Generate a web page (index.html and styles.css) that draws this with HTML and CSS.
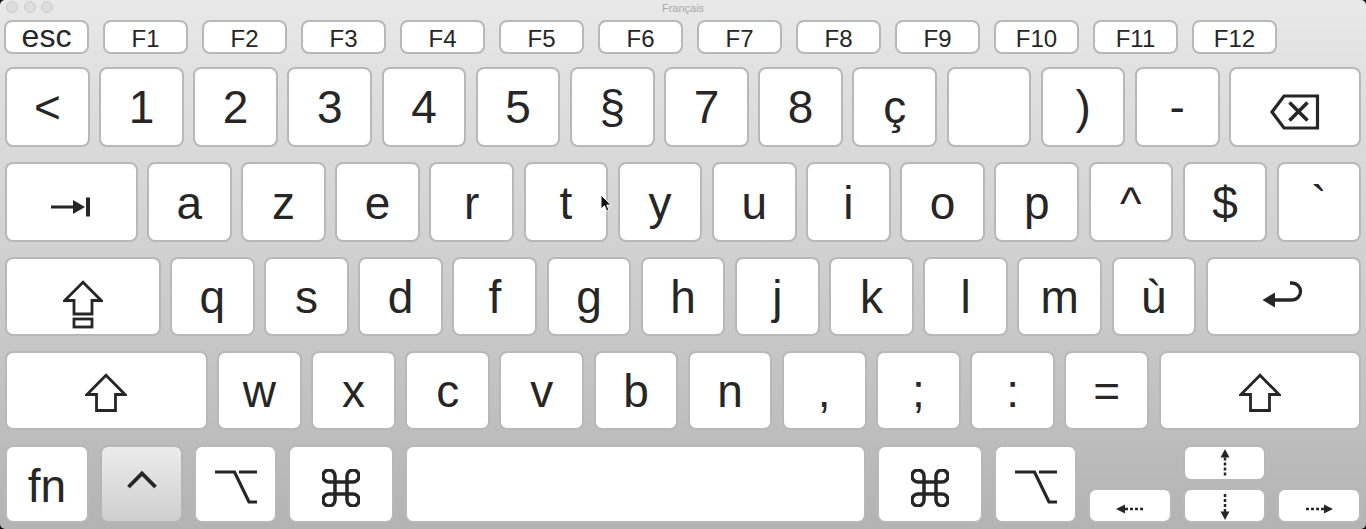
FILE: index.html
```html
<!DOCTYPE html>
<html>
<head>
<meta charset="utf-8">
<link rel="stylesheet" href="styles.css">
</head>
<body>
<div class="window">
  <div class="titlebar">
    <div class="lights"><span class="light"></span><span class="light"></span><span class="light"></span></div>
    <div class="title">Français</div>
    <div></div>
  </div>
  <div class="keyboard">
    <div class="row frow">
      <div class="key fkey esc">esc</div>
      <div class="key fkey">F1</div>
      <div class="key fkey">F2</div>
      <div class="key fkey">F3</div>
      <div class="key fkey">F4</div>
      <div class="key fkey">F5</div>
      <div class="key fkey">F6</div>
      <div class="key fkey">F7</div>
      <div class="key fkey">F8</div>
      <div class="key fkey">F9</div>
      <div class="key fkey">F10</div>
      <div class="key fkey">F11</div>
      <div class="key fkey">F12</div>
    </div>
    <div class="row r1">
      <div class="key k">&lt;</div>
      <div class="key k">1</div>
      <div class="key k">2</div>
      <div class="key k">3</div>
      <div class="key k">4</div>
      <div class="key k">5</div>
      <div class="key k">§</div>
      <div class="key k">7</div>
      <div class="key k">8</div>
      <div class="key k">ç</div>
      <div class="key k"></div>
      <div class="key k">)</div>
      <div class="key k">-</div>
      <div class="key grow">
        <svg class="ico ico-bs" width="50" height="36" viewBox="0 0 50 36"><path d="M2 18 L14 2 H47.5 V34 H14 Z" fill="none" stroke="#262626" stroke-width="3.2" stroke-linejoin="miter"/><path d="M19.5 8.5 L37.5 26.5 M37.5 8.5 L19.5 26.5" stroke="#262626" stroke-width="3.6"/></svg>
      </div>
    </div>
    <div class="row r2">
      <div class="key tab">
        <svg class="ico ico-tab" width="40" height="20" viewBox="0 0 40 20"><path d="M0 10 H26" stroke="#262626" stroke-width="3"/><path d="M22 3 L34 10 L22 17 Z" fill="#262626"/><rect x="35" y="0.5" width="4" height="19" fill="#262626"/></svg>
      </div>
      <div class="key k">a</div>
      <div class="key k">z</div>
      <div class="key k">e</div>
      <div class="key k">r</div>
      <div class="key k">t</div>
      <div class="key k">y</div>
      <div class="key k">u</div>
      <div class="key k">i</div>
      <div class="key k">o</div>
      <div class="key k">p</div>
      <div class="key k">^</div>
      <div class="key k">$</div>
      <div class="key grow">`</div>
    </div>
    <div class="row r3">
      <div class="key caps">
        <svg class="ico ico-caps" width="40" height="49" viewBox="0 0 40 49"><path d="M20 2.2 L1.8 20.5 H11 V34 H29 V20.5 H38.2 Z" fill="none" stroke="#262626" stroke-width="2.8"/><rect x="11" y="39" width="18" height="8" fill="none" stroke="#262626" stroke-width="2.8"/></svg>
      </div>
      <div class="key k">q</div>
      <div class="key k">s</div>
      <div class="key k">d</div>
      <div class="key k">f</div>
      <div class="key k">g</div>
      <div class="key k">h</div>
      <div class="key k">j</div>
      <div class="key k">k</div>
      <div class="key k">l</div>
      <div class="key k">m</div>
      <div class="key k">ù</div>
      <div class="key grow">
        <svg class="ico ico-ret" width="44" height="32" viewBox="0 0 44 32"><path d="M1.5 20 L14 12.5 V27.5 Z" fill="#262626"/><path d="M13 20 H31 A8.5 8.5 0 0 0 31 3 H29" fill="none" stroke="#262626" stroke-width="3.3"/></svg>
      </div>
    </div>
    <div class="row r4">
      <div class="key lshift">
        <svg class="ico ico-shift" width="42" height="40" viewBox="0 0 42 40"><path d="M21 2.2 L2 21.5 H11.5 V37.5 H30.5 V21.5 H40 Z" fill="none" stroke="#262626" stroke-width="2.8"/></svg>
      </div>
      <div class="key k">w</div>
      <div class="key k">x</div>
      <div class="key k">c</div>
      <div class="key k">v</div>
      <div class="key k">b</div>
      <div class="key k">n</div>
      <div class="key k">,</div>
      <div class="key k">;</div>
      <div class="key k">:</div>
      <div class="key k">=</div>
      <div class="key grow">
        <svg class="ico ico-shift" width="42" height="40" viewBox="0 0 42 40"><path d="M21 2.2 L2 21.5 H11.5 V37.5 H30.5 V21.5 H40 Z" fill="none" stroke="#262626" stroke-width="2.8"/></svg>
      </div>
    </div>
    <div class="row r5">
      <div class="key fn">fn</div>
      <div class="key mod selected">
        <svg class="ico ico-ctrl" width="32" height="20" viewBox="0 0 32 20"><path d="M2.5 17 L16 3.5 L29.5 17" fill="none" stroke="#262626" stroke-width="3.8"/></svg>
      </div>
      <div class="key mod">
        <svg class="ico ico-opt" width="44" height="36" viewBox="0 0 44 36"><path d="M1 3 H20.5 L35 33 H43 M25 3 H43" fill="none" stroke="#262626" stroke-width="3.2"/></svg>
      </div>
      <div class="key cmd">
        <svg class="ico ico-cmd" width="38" height="38" viewBox="2.5 2.5 19 19"><path d="M15 6v12a3 3 0 1 0 3-3H6a3 3 0 1 0 3 3V6a3 3 0 1 0-3 3h12a3 3 0 1 0-3-3" fill="none" stroke="#262626" stroke-width="1.75"/></svg>
      </div>
      <div class="key space"></div>
      <div class="key cmd">
        <svg class="ico ico-cmd" width="38" height="38" viewBox="2.5 2.5 19 19"><path d="M15 6v12a3 3 0 1 0 3-3H6a3 3 0 1 0 3 3V6a3 3 0 1 0-3 3h12a3 3 0 1 0-3-3" fill="none" stroke="#262626" stroke-width="1.75"/></svg>
      </div>
      <div class="key mod">
        <svg class="ico ico-opt" width="44" height="36" viewBox="0 0 44 36"><path d="M1 3 H20.5 L35 33 H43 M25 3 H43" fill="none" stroke="#262626" stroke-width="3.2"/></svg>
      </div>
      <div class="arrows">
        <div class="key arrow lr">
          <svg class="ico ico-h" width="30" height="12" viewBox="0 0 30 12"><path d="M1 6 L10 1.5 V10.5 Z" fill="#262626"/><path d="M10 6 H28" stroke="#262626" stroke-width="2.5" stroke-dasharray="3 2"/></svg>
        </div>
        <div class="updown">
          <div class="key arrow up">
            <svg class="ico" width="12" height="30" viewBox="0 0 12 30"><path d="M6 1 L10.5 9.5 H1.5 Z" fill="#262626"/><path d="M6 9.5 V29" stroke="#262626" stroke-width="2.5" stroke-dasharray="3 2"/></svg>
          </div>
          <div class="key arrow down">
            <svg class="ico ico-down" width="12" height="27" viewBox="0 0 12 27"><path d="M6 0 V18" stroke="#262626" stroke-width="2.5" stroke-dasharray="3 2"/><path d="M6 26 L10.5 17.5 H1.5 Z" fill="#262626"/></svg>
          </div>
        </div>
        <div class="key arrow lr">
          <svg class="ico ico-h" width="30" height="12" viewBox="0 0 30 12"><path d="M2 6 H20" stroke="#262626" stroke-width="2.5" stroke-dasharray="3 2"/><path d="M29 6 L20 1.5 V10.5 Z" fill="#262626"/></svg>
        </div>
      </div>
    </div>
  </div>
  <svg class="cursor" width="13" height="19" viewBox="0 0 13 19"><path d="M1 1 L1 15 L4.5 11.8 L6.8 17.2 L9 16.2 L6.8 11 L11.2 11 Z" fill="#111" stroke="#fff" stroke-width="1"/></svg>
</div>
</body>
</html>
```

FILE: styles.css
```css
* { box-sizing: border-box; }
html, body { margin: 0; padding: 0; background: #000; }
body {
  width: 1366px;
  height: 529px;
  overflow: hidden;
  font-family: "Liberation Sans", Arial, sans-serif;
}
.window {
  position: relative;
  height: 529px;
  border-radius: 5px;
  overflow: hidden;
  background: linear-gradient(to bottom, #e9e9e9 0%, #dedede 18%, #d2d2d2 45%, #c3c3c3 72%, #b3b3b3 100%);
}
.titlebar {
  height: 20px;
  display: grid;
  grid-template-columns: 1fr auto 1fr;
  align-items: start;
}
.lights {
  display: flex;
  gap: 5.5px;
  padding-left: 6px;
  padding-top: 1px;
}
.light {
  width: 12px;
  height: 12px;
  border-radius: 50%;
  background: #dddddd;
  border: 1px solid #cacaca;
}
.title {
  font-size: 11px;
  line-height: 16px;
  color: #a9a9a9;
}
.keyboard {
  display: flex;
  flex-direction: column;
  padding: 0 5px;
}
.row {
  display: flex;
  gap: 9.47px;
}
.key {
  flex: none;
  background: #fff;
  border: 2px solid #b8b8b8;
  border-radius: 8px;
  display: flex;
  align-items: center;
  justify-content: center;
  color: #262626;
  font-size: 46px;
  line-height: 1;
}
.frow {
  height: 34px;
  gap: 14px;
  margin-left: -1px;
}
.fkey {
  width: 85px;
  font-size: 24px;
  padding-top: 3px;
}
.fkey.esc {
  font-size: 32px;
  padding-top: 0;
  padding-bottom: 3px;
}
.r1 { height: 80px; margin-top: 13px; }
.r2 { height: 80px; margin-top: 15px; }
.r3 { height: 79px; margin-top: 15px; }
.r4 { height: 79px; margin-top: 15px; }
.r5 { height: 78px; margin-top: 15px; gap: 11px; }
.k { width: 84.7px; }
.grow { flex: 1 1 auto; }
.r2 .k { padding-top: 2px; }
.tab { width: 132.5px; }
.caps { width: 155.5px; }
.lshift { width: 202.5px; }
.fn { width: 84px; padding-top: 4px; }
.mod { width: 83px; }
.cmd { width: 106px; }
.space { width: 461px; }
.selected {
  background: linear-gradient(to bottom, #ececec, #cfcfcf);
  border-color: #b5b5b5;
}
.ico { display: block; flex: none; }
.ico-bs { margin-top: 9px; }
.ico-tab { margin-top: 9px; }
.ico-caps { margin-top: 15px; }
.ico-shift { margin-top: 4px; }
.ico-ret { margin-top: -2px; }
.ico-ctrl { margin-top: -8px; }
.ico-opt { margin-top: 6px; }
.ico-cmd { margin-top: 7px; }
.ico-h { margin-top: 7px; }
.ico-down { margin-top: 4px; }
.arrows {
  display: flex;
  gap: 11px;
  align-items: flex-end;
  height: 100%;
}
.arrow.lr { width: 84px; height: 35px; }
.updown {
  display: flex;
  flex-direction: column;
  gap: 7px;
  width: 83px;
}
.arrow.up { width: 83px; height: 36px; }
.arrow.down { width: 83px; height: 35px; }
.cursor {
  position: absolute;
  left: 600px;
  top: 194px;
}
```
